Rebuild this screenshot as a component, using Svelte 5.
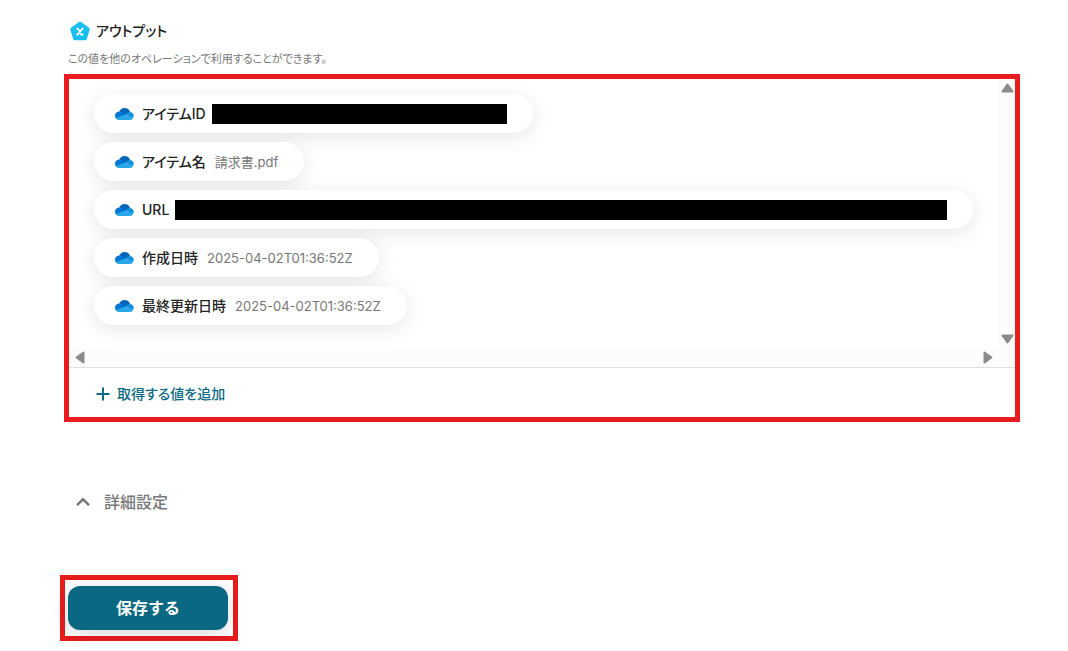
<script>
  const outputs = [
    { label: "アイテムID", masked: true, size: 295 },
    { label: "アイテム名", value: "請求書.pdf" },
    { label: "URL", masked: true, size: 772 },
    { label: "作成日時", value: "2025-04-02T01:36:52Z" },
    { label: "最終更新日時", value: "2025-04-02T01:36:52Z" },
  ];

  let list;
  let open = $state(false);

  function scroll(left, top) {
    list.scrollBy({ left, top });
  }
</script>

<main>
  <h2>
    <svg class="badge" viewBox="0 0 20 20" aria-hidden="true">
      <path
        d="M10 2.5 18 8.2 15.2 17.5H4.8L2 8.2Z"
        fill="#15bff0"
        stroke="#15bff0"
        stroke-width="3.4"
        stroke-linejoin="round"
      />
      <path
        d="M6.4 7.6h1.5l3.4 6h2.1M13.6 7.6h-1.2l-4.8 6H6.2"
        fill="none"
        stroke="#fff"
        stroke-width="1.7"
      />
    </svg>
    アウトプット
  </h2>
  <p class="note">この値を他のオペレーションで利用することができます。</p>

  <section class="panel">
    <div class="viewport">
      <ul class="outputs" bind:this={list}>
        {#each outputs as item}
          <li class="chip">
            <svg class="cloud" viewBox="0 0 20 14" aria-hidden="true">
              <path d="M5 5.2C6.2 2.3 8.3 1 10.6 1c2.6 0 4.7 1.6 5.5 4L12 8.5Z" fill="#0364b8" />
              <path d="M1.9 11.3C-.2 8.4 1.4 4.6 5 4.4c1.2 0 2.2.4 3.1 1l4.2 2.5L4 12.6Z" fill="#0078d4" />
              <path d="M11.7 7.6c1-1.8 2.5-2.8 4.5-2.7 2.5.2 3.9 2.5 3.4 4.8L18 11Z" fill="#1490df" />
              <path d="M1.9 11.3 11.7 7.3l7.7 3.2C18.9 12.1 17.8 13 16 13H5c-1.3 0-2.4-.6-3.1-1.7Z" fill="#28a8ea" />
            </svg>
            <span class="label">{item.label}</span>
            {#if item.masked}
              <span class="mask" style:width="{item.size}px"></span>
            {:else}
              <span class="value">{item.value}</span>
            {/if}
          </li>
        {/each}
      </ul>

      <div class="bar vertical">
        <button type="button" aria-label="上へスクロール" onclick={() => scroll(0, -40)}>
          <svg viewBox="0 0 13 10"><path d="M6.5 1.5 11.5 8.5H1.5Z" /></svg>
        </button>
        <button type="button" aria-label="下へスクロール" onclick={() => scroll(0, 40)}>
          <svg viewBox="0 0 13 10"><path d="M1.5 1.5h10L6.5 8.5Z" /></svg>
        </button>
      </div>
      <div class="bar horizontal">
        <button type="button" aria-label="左へスクロール" onclick={() => scroll(-40, 0)}>
          <svg viewBox="0 0 10 13"><path d="M8.5 1.5v10L1.5 6.5Z" /></svg>
        </button>
        <button type="button" aria-label="右へスクロール" onclick={() => scroll(40, 0)}>
          <svg viewBox="0 0 10 13"><path d="M1.5 1.5 8.5 6.5 1.5 11.5Z" /></svg>
        </button>
      </div>
      <div class="corner"></div>
    </div>

    <div class="footer">
      <button type="button" class="add">
        <svg viewBox="0 0 14 14" aria-hidden="true"><path d="M7 .5v13M.5 7h13" /></svg>
        取得する値を追加
      </button>
    </div>
  </section>

  <button type="button" class="advanced" aria-expanded={open} onclick={() => (open = !open)}>
    <svg viewBox="0 0 14 10" aria-hidden="true"><path d="M1 8.2 7 2.3l6 5.9" /></svg>
    詳細設定
  </button>

  <div class="save-frame">
    <button type="button" class="save">保存する</button>
  </div>
</main>

<style>
  :global(body) {
    margin: 0;
    background: #fff;
  }
  main {
    box-sizing: border-box;
    padding: 20px 48px 10px 60px;
    font-family: Inter, "Noto Sans CJK JP", sans-serif;
    font-feature-settings: "palt";
    color: #222;
  }
  button {
    font: inherit;
    font-feature-settings: inherit;
    border: 0;
    padding: 0;
    background: none;
    cursor: pointer;
  }
  svg {
    display: block;
    flex-shrink: 0;
  }
  h2 {
    display: flex;
    align-items: center;
    gap: 6px;
    margin: 0 0 0 10px;
    font-size: 14px;
    font-weight: 500;
    line-height: 22px;
  }
  .badge {
    width: 20px;
    height: 20px;
  }
  .note {
    margin: 8px 0 6px 8px;
    font-size: 11px;
    line-height: 18px;
    color: #777;
  }
  .panel {
    margin-left: 4px;
    border: 5px solid #e81c1f;
  }
  .viewport {
    display: grid;
    grid-template-columns: minmax(0, 1fr) 16px;
    grid-template-rows: auto 19px;
    border-bottom: 1px solid #e0e0e0;
  }
  .outputs {
    display: flex;
    flex-direction: column;
    align-items: flex-start;
    gap: 9px;
    margin: 0;
    padding: 15px 25px 23px;
    overflow: hidden;
    list-style: none;
  }
  .chip {
    display: flex;
    align-items: center;
    box-sizing: border-box;
    height: 39px;
    padding: 0 26px 0 20px;
    border-radius: 20px;
    background: #fff;
    box-shadow: 0 4px 20px rgba(0, 0, 0, 0.1);
    line-height: 20px;
    white-space: nowrap;
  }
  .cloud {
    width: 20px;
    height: 14px;
    margin-right: 8px;
  }
  .label {
    font-size: 14px;
    font-weight: 500;
  }
  .value {
    margin-left: 9px;
    font-size: 13px;
    color: #777;
  }
  .mask {
    flex-shrink: 0;
    height: 20px;
    margin-left: 6px;
    background: #000;
  }
  .bar {
    display: flex;
    justify-content: space-between;
    background: #fcfcfc;
  }
  .bar path {
    fill: #8b8b8b;
    stroke: #8b8b8b;
    stroke-width: 2;
    stroke-linejoin: round;
  }
  .vertical {
    flex-direction: column;
    align-items: center;
    padding: 4px 0;
  }
  .vertical svg {
    width: 13px;
    height: 10px;
  }
  .horizontal {
    align-items: center;
    padding: 0 6px;
  }
  .horizontal svg {
    width: 10px;
    height: 13px;
  }
  .corner {
    background: #fcfcfc;
  }
  .footer {
    padding: 15px 27px 12px;
  }
  .add {
    display: flex;
    align-items: center;
    gap: 7px;
    font-size: 14px;
    font-weight: 500;
    line-height: 22px;
    color: #0b6a83;
  }
  .add svg {
    width: 14px;
    height: 14px;
    fill: none;
    stroke: currentColor;
    stroke-width: 2;
  }
  .advanced {
    display: flex;
    align-items: center;
    gap: 14px;
    margin: 68px 0 0 16px;
    font-size: 16px;
    font-weight: 500;
    line-height: 24px;
    color: #777;
  }
  .advanced svg {
    width: 14px;
    height: 10px;
    fill: none;
    stroke: currentColor;
    stroke-width: 2.4;
  }
  .save-frame {
    width: fit-content;
    margin-top: 61px;
    padding: 6px 5px 6px 3px;
    border: 5px solid #e81c1f;
  }
  .save {
    width: 160px;
    height: 44px;
    border-radius: 12px;
    background: #0b6882;
    box-shadow: 0 4px 20px rgba(0, 0, 0, 0.15);
    font-size: 16px;
    font-weight: 700;
    font-feature-settings: normal;
    line-height: 24px;
    color: #fff;
  }
</style>
